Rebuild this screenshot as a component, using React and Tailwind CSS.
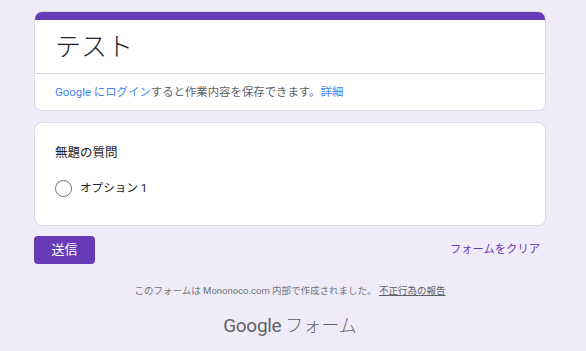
export default function App() {
  const jp = { fontFamily: 'Roboto, "Noto Sans CJK JP", sans-serif' }

  return (
    <div className="min-h-screen bg-[#f0ebf8] pt-[11px] pl-[34px] pr-[40px]" style={jp}>
      {/* header card */}
      <div className="rounded-lg border border-[#dadce0] bg-white overflow-hidden">
        <div className="h-[8px] bg-[#673ab7]" />
        <div className="h-[54px] flex items-center px-5 border-b border-[#dadce0]">
          <h1 className="text-[26px] leading-none font-light text-[#202124]">テスト</h1>
        </div>
        <div className="h-[36px] flex items-center px-5 pt-[1px] text-[11.4px] text-[#5f6368]">
          <span className="text-[#4285f4]">Google にログイン</span>
          <span>すると作業内容を保存できます。</span>
          <span className="text-[#4285f4]">詳細</span>
        </div>
      </div>

      {/* question card */}
      <div className="mt-[11px] h-[104px] rounded-lg border border-[#dadce0] bg-white px-5 pt-[21px]">
        <div className="text-[12.5px] text-[#202124]">無題の質問</div>
        <label className="mt-[17px] flex items-center gap-[8px]">
          <span className="w-[17px] h-[17px] rounded-full border-[1.5px] border-[#6f6f6f]" />
          <span className="text-[11.6px] text-[#202124]">オプション 1</span>
        </label>
      </div>

      {/* actions */}
      <div className="mt-[10px] flex items-center justify-between">
        <button className="w-[61px] h-[28px] rounded bg-[#673ab7] text-white text-[13px]">送信</button>
        <button className="text-[11.3px] text-[#673ab7] pr-[6px]">フォームをクリア</button>
      </div>

      <div className="mt-[20px] text-center text-[9.5px] text-[#70757a]">
        このフォームは Mononoco.com 内部で作成されました。 <span className="underline text-[#5f6368]">不正行為の報告</span>
      </div>

      <div className="mt-[14px] flex justify-center items-baseline gap-[4px] text-[#5f6368]">
        <span className="text-[19px] tracking-[-0.3px]">Google</span>
        <span className="text-[18px] font-light">フォーム</span>
      </div>
    </div>
  )
}
